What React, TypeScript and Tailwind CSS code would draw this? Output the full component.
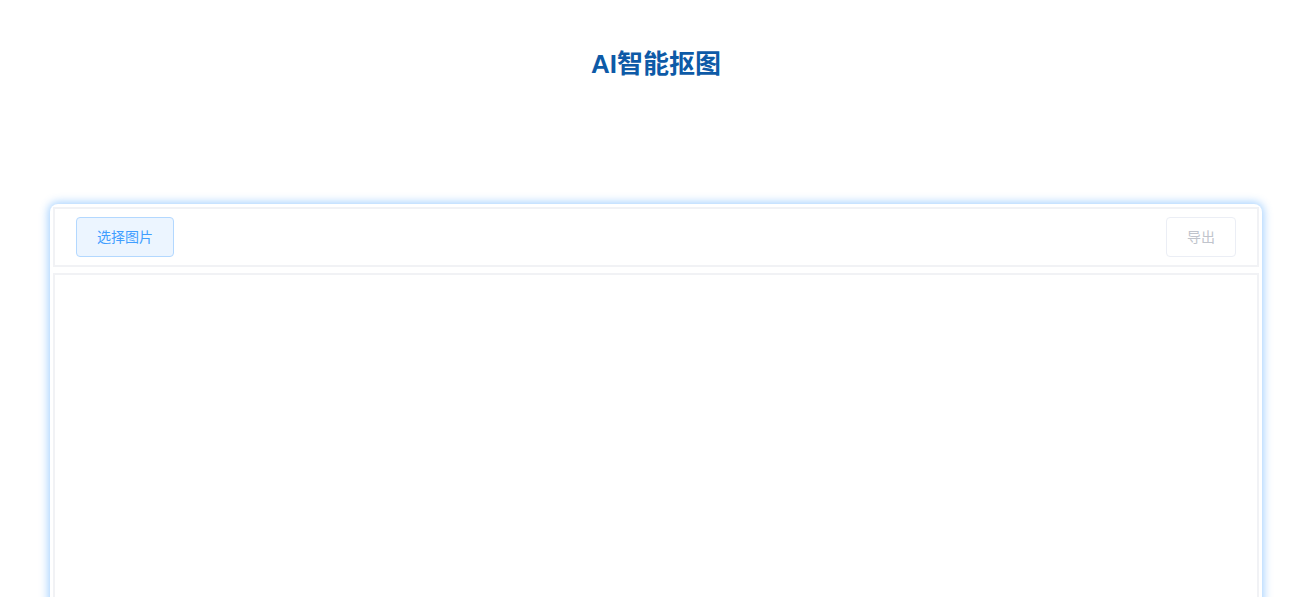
export default function App() {
  return (
    <div
      className="min-h-[597px] bg-white pl-[50px] pr-[44px]"
      style={{ fontFamily: '"Liberation Sans", "Noto Sans CJK SC", sans-serif' }}
    >
      {/* Title */}
      <h1 className="pt-[49px] text-center text-[26px] leading-[30px] font-bold text-[#0d5aa7]">
        AI智能抠图
      </h1>

      {/* Main card */}
      <div className="mt-[125px] rounded-[8px] bg-white p-[3px] shadow-[0_0_8px_2px_rgba(64,158,255,0.45)]">
        {/* Toolbar */}
        <div className="flex items-center justify-between border-2 border-[#f1f2f5] px-[21px] py-[8px]">
          <button className="h-[40px] rounded-[4px] border border-[#b3d8ff] bg-[#ecf5ff] px-[20px] text-[14px] text-[#409eff]">
            选择图片
          </button>
          <button
            disabled
            className="h-[40px] rounded-[4px] border border-[#ebeef5] bg-white px-[20px] text-[14px] text-[#c0c4cc]"
          >
            导出
          </button>
        </div>

        {/* Canvas area */}
        <div className="mt-[6px] h-[420px] border-2 border-[#f1f2f5]" />
      </div>
    </div>
  );
}
